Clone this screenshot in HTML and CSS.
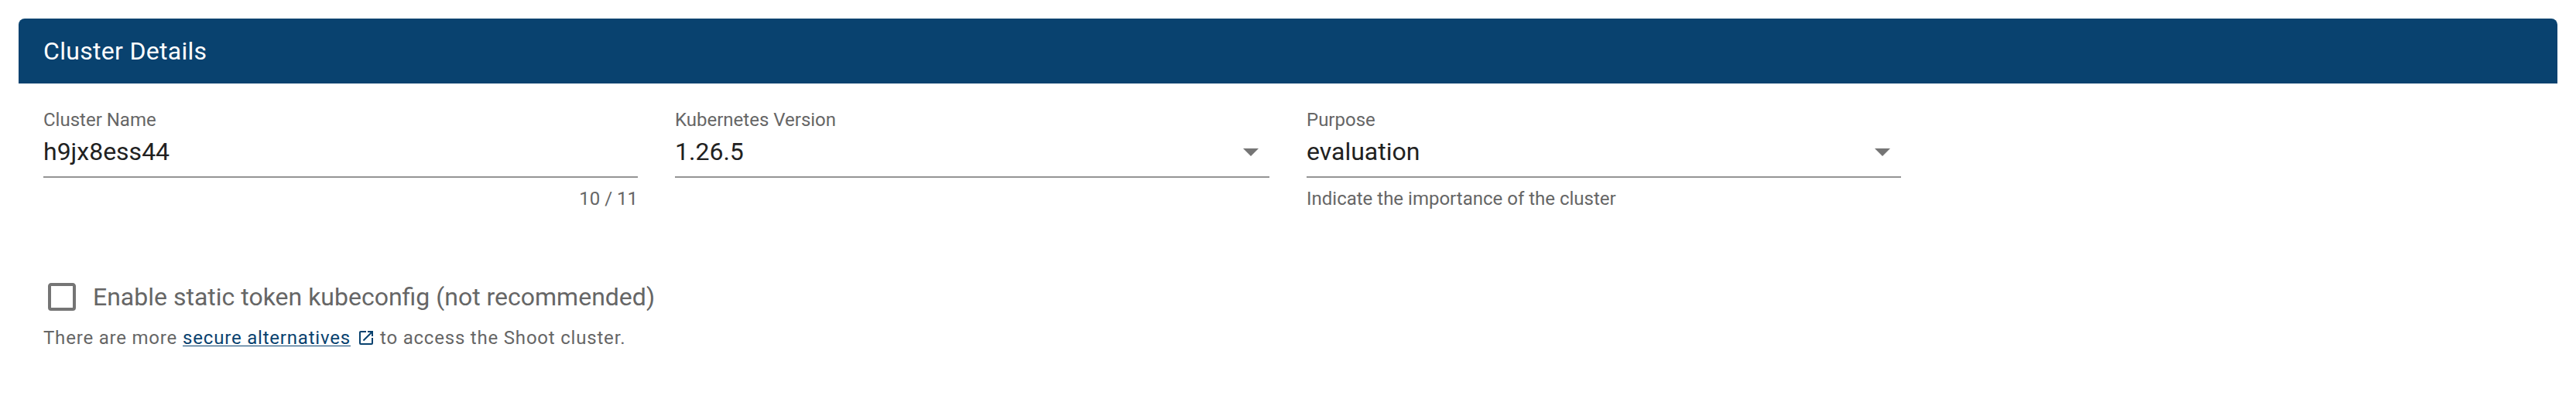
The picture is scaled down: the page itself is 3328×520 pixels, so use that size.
FILE: index.html
```
<!DOCTYPE html>
<html lang="en">
<head>
<meta charset="utf-8">
<title>Cluster Details</title>
<link rel="stylesheet" href="styles.css">
</head>
<body>
<section class="card">
  <h2 class="card-title">Cluster Details</h2>
  <div class="card-body">
    <div class="fields">
      <div class="field">
        <div class="label">Cluster Name</div>
        <div class="control"><span class="value">h9jx8ess44</span></div>
        <div class="details counter">10 / 11</div>
      </div>
      <div class="field">
        <div class="label">Kubernetes Version</div>
        <div class="control"><span class="value">1.26.5</span><svg class="arrow" viewBox="0 0 24 24"><path d="M7,10L12,15L17,10H7Z"/></svg></div>
      </div>
      <div class="field">
        <div class="label">Purpose</div>
        <div class="control"><span class="value">evaluation</span><svg class="arrow" viewBox="0 0 24 24"><path d="M7,10L12,15L17,10H7Z"/></svg></div>
        <div class="details">Indicate the importance of the cluster</div>
      </div>
    </div>
    <div class="check-row">
      <svg class="checkbox" viewBox="0 0 24 24"><path d="M19,3H5C3.89,3 3,3.89 3,5V19A2,2 0 0,0 5,21H19A2,2 0 0,0 21,19V5C21,3.89 20.1,3 19,3M19,5V19H5V5H19Z"/></svg>
      <span class="check-label">Enable static token kubeconfig (not recommended)</span>
    </div>
    <div class="hint"><span>There are more</span><a class="link">secure alternatives</a><svg class="open" viewBox="0 0 24 24"><path d="M14,3V5H17.59L7.76,14.83L9.17,16.24L19,6.41V10H21V3M19,19H5V5H12V3H5C3.89,3 3,3.9 3,5V19A2,2 0 0,0 5,21H19A2,2 0 0,0 21,19V12H19V19Z"/></svg><span>to access the Shoot cluster.</span></div>
  </div>
</section>
</body>
</html>
```
FILE: styles.css
```
* { box-sizing: border-box; }
body {
  margin: 0;
  padding: 24px;
  background: #fff;
  font-family: Roboto, sans-serif;
  color: #666;
}
.card-title {
  margin: 0;
  height: 84px;
  padding: 0 32px;
  border-radius: 8px 8px 0 0;
  background: #09426f;
  color: #fff;
  font-size: 32px;
  font-weight: 400;
  line-height: 84px;
  letter-spacing: 0.3px;
}
.card-body { padding: 33px 32px 0; }
.fields {
  display: grid;
  grid-template-columns: repeat(3, 768px);
  gap: 48px;
  height: 211px;
}
.label {
  height: 27px;
  font-size: 24px;
  line-height: 28px;
}
.control {
  display: flex;
  justify-content: space-between;
  align-items: center;
  height: 62px;
  padding-bottom: 4px;
  border-bottom: 2px solid #949494;
}
.value {
  color: #212121;
  font-size: 32px;
  line-height: 48px;
}
.arrow { width: 48px; height: 48px; fill: #757575; }
.details {
  margin-top: 13px;
  font-size: 24px;
  line-height: 28px;
}
.counter { text-align: right; }
.check-row {
  display: flex;
  align-items: center;
  gap: 16px;
  height: 64px;
}
.checkbox { width: 48px; height: 48px; fill: #757575; }
.check-label { font-size: 32px; line-height: 48px; }
.hint {
  display: flex;
  align-items: center;
  height: 28px;
  margin-top: 7px;
  font-size: 24px;
  line-height: 28px;
  letter-spacing: 0.8px;
}
.link {
  margin-left: 7px;
  color: #09426f;
  text-decoration: underline;
  text-decoration-thickness: 1px;
  text-underline-offset: 2px;
}
.open { width: 24px; height: 24px; margin: 0 6px 0 8px; fill: #09426f; }
```
